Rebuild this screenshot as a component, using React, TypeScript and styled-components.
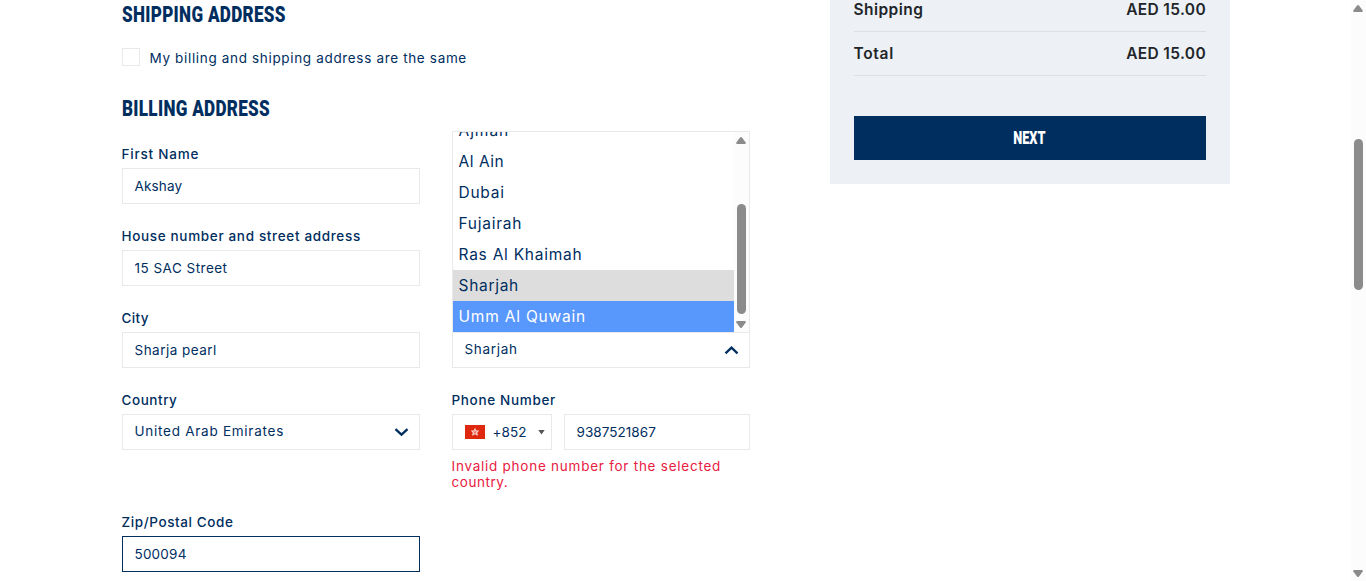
import React from 'react';
import styled, { createGlobalStyle } from 'styled-components';

const navy = '#002e5f';
const line = '#e9e9e9';

const GlobalStyle = createGlobalStyle`
  * { box-sizing: border-box; }
  body {
    margin: 0;
    background: #fff;
    color: ${navy};
    font: 400 13.5px/16px Inter, 'Liberation Sans', sans-serif;
    overflow: hidden;
  }
`;

const Page = styled.div`
  display: flex;
  align-items: flex-start;
  height: 581px;
  padding-left: 122px;
  overflow: hidden;
`;

const Checkout = styled.main`
  width: 628px;
  margin-right: 80px;
`;

const Heading = styled.h2`
  display: block;
  width: max-content;
  height: 30px;
  margin: 0;
  font: 900 22.5px/28px Roboto, sans-serif;
  letter-spacing: 0.4px;
  transform: scaleX(0.759);
  transform-origin: left;
`;

const Text = styled.span<{ $track?: number }>`
  margin-left: -0.5px;
  letter-spacing: ${(p) => p.$track ?? 0.65}px;
  white-space: nowrap;
`;

const SameAddress = styled.label`
  display: flex;
  gap: 10px;
  height: 20px;
  margin: 18px 0 26px;
  line-height: 20px;
`;

const CheckBox = styled.span`
  width: 18px;
  height: 18px;
  border: 1px solid ${line};
`;

const Fields = styled.div`
  display: grid;
  grid-template-columns: 298px 298px;
  gap: 24px 32px;
  margin-top: 22px;
`;

const Field = styled.div<{ $column: number }>`
  grid-column: ${(p) => p.$column};
`;

const Label = styled.div`
  height: 22px;
  font-weight: 500;
`;

const Control = styled.div<{ $focused?: boolean }>`
  display: flex;
  align-items: center;
  flex: 1;
  height: 36px;
  padding: 0 12px;
  border: 1px solid ${(p) => (p.$focused ? navy : line)};
`;

const Select = styled(Control)`
  position: relative;
  justify-content: space-between;
  padding: 0 10px 2px 12px;
`;

const OptionPanel = styled.div`
  position: absolute;
  left: -1px;
  right: -1px;
  bottom: 100%;
  display: flex;
  height: 202px;
  border: 1px solid ${line};
  background: #fff;
`;

const OptionList = styled.div`
  display: flex;
  flex: 1;
  flex-direction: column;
  justify-content: flex-end;
  overflow: hidden;
`;

const optionColors = {
  plain: { back: '#fff', ink: navy },
  selected: { back: '#ddd', ink: navy },
  active: { back: '#5897fb', ink: '#fff' },
};

const Option = styled.div<{ $state: keyof typeof optionColors }>`
  flex: none;
  height: 31px;
  padding-left: 6px;
  font-size: 15.5px;
  line-height: 31px;
  background: ${(p) => optionColors[p.$state].back};
  color: ${(p) => optionColors[p.$state].ink};
`;

const Track = styled.div`
  display: flex;
  flex-direction: column;
  align-items: center;
  width: 15px;
  padding: 5px 0 4px;
  background: #fcfcfc;
`;

const Thumb = styled.div<{ $offset: number; $length: number }>`
  width: 9px;
  height: ${(p) => p.$length}px;
  margin: ${(p) => p.$offset}px 0 auto;
  border-radius: 5px;
  background: #8b8b8b;
`;

const PageScroll = styled.div`
  display: flex;
  height: 581px;
  margin-left: auto;
`;

const PhoneRow = styled.div`
  display: flex;
  gap: 12px;
`;

const DialCode = styled(Control)`
  flex: 0 0 100px;
  gap: 8px;
  padding-right: 6px;

  & > :last-child {
    margin-left: auto;
  }
`;

const ErrorNote = styled.div`
  width: 290px;
  margin-top: 8px;
  color: #e8203f;
`;

const Summary = styled.aside`
  width: 400px;
  height: 184px;
  padding: 0 24px;
  background: #edf1f5;
`;

const SummaryRow = styled.div<{ $height: number }>`
  display: flex;
  align-items: flex-end;
  justify-content: space-between;
  height: ${(p) => p.$height}px;
  border-bottom: 1px solid #dce0e4;
  color: #212529;
  font-size: 15.5px;
  font-weight: 600;
  line-height: 43px;
`;

const NextButton = styled.button`
  display: block;
  width: 100%;
  height: 44px;
  margin-top: 40px;
  padding: 0;
  border: 0;
  background: ${navy};
  color: #fff;
  font: 900 18.5px/45px Roboto, sans-serif;
`;

const ButtonText = styled.span`
  display: inline-block;
  margin-right: 1px;
  transform: scaleX(0.69);
`;

function ScrollBar({ offset, length }: { offset: number; length: number }) {
  return (
    <Track>
      <svg width="11" height="7" viewBox="0 0 11 7">
        <path d="M4 .6Q5-.5 6 .6L9.7 5.6Q10 7 9 7H1Q0 7 .3 5.6Z" fill="#8b8b8b" />
      </svg>
      <Thumb $offset={offset} $length={length} />
      <svg width="11" height="7" viewBox="0 0 11 7">
        <path d="M4 6.4Q5 7.5 6 6.4L9.7 1.4Q10 0 9 0H1Q0 0 .3 1.4Z" fill="#8b8b8b" />
      </svg>
    </Track>
  );
}

function Chevron({ up }: { up?: boolean }) {
  return (
    <svg width="15" height="11" viewBox="0 0 15 11">
      <path d={up ? 'M1.5 9.3 7.5 3.6 13.5 9.3' : 'M1.5 3.2 7.5 8.7 13.5 3.2'} fill="none" stroke={navy} strokeWidth="2.3" />
    </svg>
  );
}

function Flag() {
  return (
    <svg width="20" height="14" viewBox="0 0 20 14">
      <path d="M0 0h20v14H0z" fill="#de2910" />
      <path d="m10 2.8 1.3 2.6 2.9.1-2 2.2.8 3-3-1.5-3 1.5.8-3-2-2.2 2.9-.1z" fill="#fae0dc" />
      <path d="M10 5v2.3m0 0L8 6.6m2 .7 2-.7m-2 .7-1.2 1.8M10 7.3l1.2 1.8" stroke="#de2910" strokeWidth=".5" />
    </svg>
  );
}

type InputProps = { label: string; labelTrack: number; value: string; track: number; focused?: boolean };

function TextField({ label, labelTrack, value, track, focused }: InputProps) {
  return (
    <Field $column={1}>
      <Label><Text $track={labelTrack}>{label}</Text></Label>
      <Control $focused={focused}><Text $track={track}>{value}</Text></Control>
    </Field>
  );
}

const states: { name: string; track: number; state: keyof typeof optionColors }[] = [
  { name: 'Ajman', track: 0.95, state: 'plain' },
  { name: 'Al Ain', track: 0.55, state: 'plain' },
  { name: 'Dubai', track: 0.75, state: 'plain' },
  { name: 'Fujairah', track: 0.74, state: 'plain' },
  { name: 'Ras Al Khaimah', track: 0.75, state: 'plain' },
  { name: 'Sharjah', track: 0.7, state: 'selected' },
  { name: 'Umm Al Quwain', track: 0.8, state: 'active' },
];

export default function App() {
  return (
    <Page>
      <GlobalStyle />
      <Checkout>
        <Heading>SHIPPING ADDRESS</Heading>
        <SameAddress>
          <CheckBox />
          <Text $track={0.66}>My billing and shipping address are the same</Text>
        </SameAddress>
        <Heading>BILLING ADDRESS</Heading>
        <Fields>
          <TextField label="First Name" labelTrack={0.8} value="Akshay" track={0.15} />
          <TextField label="House number and street address" labelTrack={0.66} value="15 SAC Street" track={0.48} />
          <TextField label="City" labelTrack={0.4} value="Sharja pearl" track={0.48} />
          <Field $column={2}>
            <Label />
            <Select>
              <Text $track={0.7}>Sharjah</Text>
              <Chevron up />
              <OptionPanel>
                <OptionList>
                  {states.map((s) => (
                    <Option key={s.name} $state={s.state}><Text $track={s.track}>{s.name}</Text></Option>
                  ))}
                </OptionList>
                <ScrollBar offset={60} length={110} />
              </OptionPanel>
            </Select>
          </Field>
          <Field $column={1}>
            <Label><Text $track={0.55}>Country</Text></Label>
            <Select><Text $track={0.74}>United Arab Emirates</Text><Chevron /></Select>
          </Field>
          <Field $column={2}>
            <Label><Text $track={0.67}>Phone Number</Text></Label>
            <PhoneRow>
              <DialCode>
                <Flag />
                <Text $track={0.1}>+852</Text>
                <svg width="7" height="5" viewBox="0 0 7 5"><path d="M.3 0h6.4L3.5 4.5z" fill="#555" /></svg>
              </DialCode>
              <Control><Text $track={0.05}>9387521867</Text></Control>
            </PhoneRow>
            <ErrorNote>
              <Text $track={0.75}>Invalid phone number for the selected</Text><br />
              <Text $track={0.55}>country.</Text>
            </ErrorNote>
          </Field>
          <TextField label="Zip/Postal Code" labelTrack={0.6} value="500094" track={0.2} focused />
        </Fields>
      </Checkout>
      <Summary>
        <SummaryRow $height={32}><Text $track={0.45}>Shipping</Text><Text $track={0.35}>AED 15.00</Text></SummaryRow>
        <SummaryRow $height={44}><Text $track={0.7}>Total</Text><Text $track={0.35}>AED 15.00</Text></SummaryRow>
        <NextButton><ButtonText>NEXT</ButtonText></NextButton>
      </Summary>
      <PageScroll><ScrollBar offset={127} length={151} /></PageScroll>
    </Page>
  );
}
